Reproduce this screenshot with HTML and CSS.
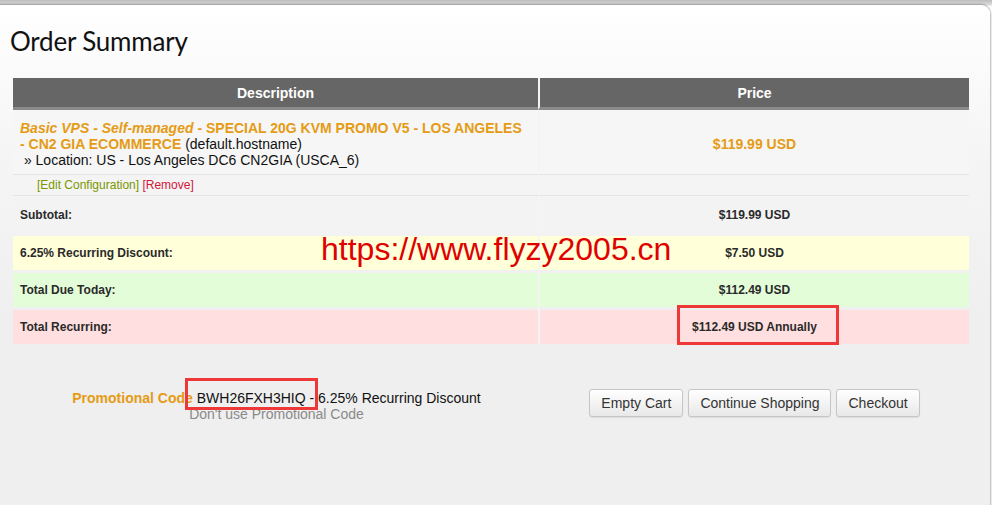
FILE: index.html
```html
<!DOCTYPE html>
<html>
<head>
<meta charset="utf-8">
<link rel="stylesheet" href="styles.css">
</head>
<body>
<div class="panel">
  <h1 class="title">Order Summary</h1>
  <table class="cart">
    <thead>
      <tr><th class="c-desc">Description</th><th class="c-price">Price</th></tr>
    </thead>
    <tbody>
      <tr class="r-product">
        <td class="c-desc">
          <span class="pname"><em>Basic VPS - Self-managed</em> - SPECIAL 20G KVM PROMO V5 - LOS ANGELES - CN2 GIA ECOMMERCE</span> (default.hostname)<br>
          &nbsp;» Location: US - Los Angeles DC6 CN2GIA (USCA_6)
        </td>
        <td class="c-price"><span class="pprice">$119.99 USD</span></td>
      </tr>
      <tr class="r-edit">
        <td class="c-desc"><span class="edit">[Edit Configuration]</span> <span class="remove">[Remove]</span></td>
        <td class="c-price"></td>
      </tr>
      <tr class="r-total r-sub"><td class="c-desc">Subtotal:</td><td class="c-price">$119.99 USD</td></tr>
      <tr class="r-total r-disc"><td class="c-desc">6.25% Recurring Discount:</td><td class="c-price">$7.50 USD</td></tr>
      <tr class="r-total r-due"><td class="c-desc">Total Due Today:</td><td class="c-price">$112.49 USD</td></tr>
      <tr class="r-total r-rec"><td class="c-desc">Total Recurring:</td><td class="c-price"><span class="hl hl-rec">$112.49 USD Annually</span></td></tr>
    </tbody>
  </table>
  <div class="actions">
    <div class="promo">
      <div><span class="promo-label">Promotional Code</span> <span class="hl hl-code">BWH26FXH3HIQ -</span> 6.25% Recurring Discount</div>
      <div class="promo-remove">Don't use Promotional Code</div>
    </div>
    <div class="buttons">
      <button class="btn">Empty Cart</button>
      <button class="btn">Continue Shopping</button>
      <button class="btn">Checkout</button>
    </div>
  </div>
  <div class="watermark">https://www.flyzy2005.cn</div>
</div>
</body>
</html>
```

FILE: styles.css
```css
html, body {
  margin: 0;
  padding: 0;
  height: 100%;
}
body {
  background: linear-gradient(#bdbdbd 0, #dedede 5px, #ffffff 6px);
  font-family: "Liberation Sans", Arial, sans-serif;
  color: #222;
  overflow: hidden;
}
.panel {
  position: relative;
  margin: 5px 2px 0 0;
  height: 500px;
  border-radius: 0 9px 0 0;
  box-shadow: 0 0 2px 1px rgba(0,0,0,0.3);
  background: linear-gradient(#ffffff 0, #f5f5f5 150px, #efefef 320px, #efefef 100%);
  padding: 0;
  overflow: hidden;
}
.title {
  margin: 0;
  padding: 19px 0 0 10px;
  height: 73px;
  font-family: Lato, sans-serif;
  font-weight: normal;
  font-size: 26px;
  letter-spacing: -0.2px;
  color: #111;
  line-height: 34px;
  box-sizing: border-box;
}
.cart {
  margin-left: 13px;
  width: 956px;
  border-collapse: separate;
  border-spacing: 0;
  font-size: 12px;
  table-layout: fixed;
}
.cart .c-desc { width: 525px; }
.cart th {
  background: #666;
  color: #fff;
  font-size: 14px;
  font-weight: bold;
  height: 29px;
  padding: 0;
  border-bottom: 3px solid #8a8a8a;
}
.cart th.c-price,
.cart td.c-price {
  border-left: 2px solid #f4f4f4;
  text-align: center;
}
.r-product td {
  height: 61px;
  padding: 3px 10px 0 7px;
  font-size: 14px;
  line-height: 16px;
  color: #111;
  border-bottom: 1px solid #e4e4e4;
  background: #f6f6f6;
}
.r-product td.c-price { padding: 4px 0 0; height: 60px; }
.pname {
  color: #e59b14;
  font-weight: bold;
  font-size: 14px;
}
.pprice {
  color: #e59b14;
  font-weight: bold;
  font-size: 14px;
}
.r-edit td {
  height: 20px;
  padding: 0 0 0 24px;
  font-size: 12px;
  border-bottom: 1px solid #e4e4e4;
  background: #f4f4f4;
}
.r-edit td.c-price { padding: 0; }
.edit { color: #7a9700; }
.remove { color: #d2173a; }
.r-total td {
  height: 34px;
  padding: 0 0 0 7px;
  font-weight: bold;
  font-size: 12px;
  color: #2a2a2a;
  border-top: 3px solid transparent;
  background-clip: padding-box;
}
.r-total td.c-price { padding: 0; }
.r-sub td { background-color: #f3f3f3; border-top-width: 0; height: 37px; }
.r-disc td { background-color: #ffffd9; }
.r-due td { background-color: #e4fdd9; }
.r-rec td { background-color: #ffdfdf; }
.hl { position: relative; }
.hl::after {
  content: "";
  position: absolute;
  border: 3px solid #ee3838;
}
.hl-rec::after { left: -15px; right: -22px; top: -15px; bottom: -11px; }
.hl-code::after { left: -12px; right: -4px; top: -12px; bottom: -4px; }
.actions {
  display: grid;
  grid-template-columns: 527px 429px;
  margin: 45px 0 0 13px;
  align-items: center;
}
.promo {
  text-align: center;
  font-size: 14px;
  line-height: 16px;
  color: #111;
}
.promo-label {
  color: #e59b14;
  font-weight: bold;
}
.promo-remove { color: #8a8a8a; }
.buttons {
  display: flex;
  justify-content: center;
  gap: 5px;
  padding-bottom: 6px;
}
.btn {
  font-family: "Liberation Sans", Arial, sans-serif;
  font-size: 14px;
  color: #333;
  height: 28px;
  margin: 0;
  padding: 0 11px;
  border: 1px solid #c6c6c6;
  border-radius: 3px;
  background: linear-gradient(#ffffff, #e8e8e8);
  box-shadow: 0 1px 1px rgba(0,0,0,0.08);
}
.watermark {
  position: absolute;
  left: 321px;
  top: 226px;
  font-family: "Liberation Sans", Arial, sans-serif;
  font-size: 32px;
  color: #e00000;
  line-height: 36px;
}
```
